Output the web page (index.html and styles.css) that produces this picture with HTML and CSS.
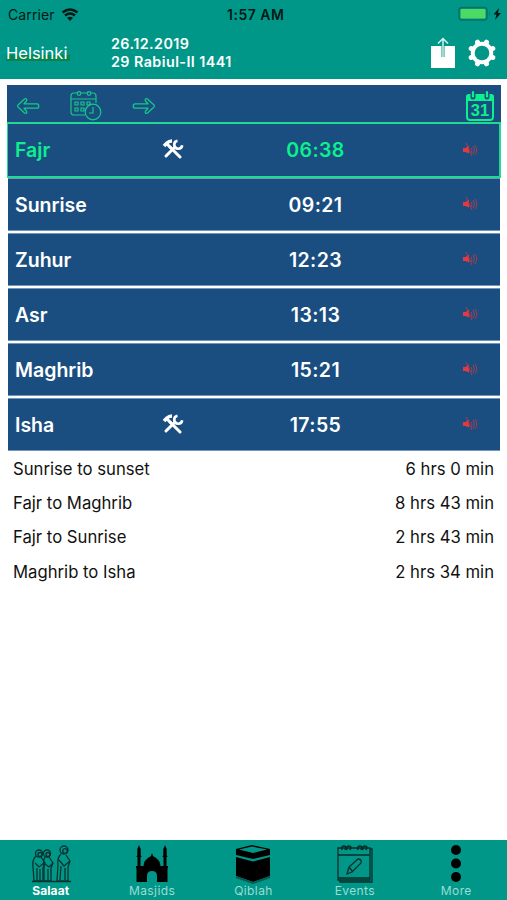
FILE: index.html
```html
<!DOCTYPE html>
<html lang="en">
<head>
<meta charset="utf-8">
<title>Salaat times</title>
<link rel="stylesheet" href="styles.css">
</head>
<body>
<svg class="defs" width="0" height="0" aria-hidden="true">
  <symbol id="arrow" viewBox="0 0 24 18"><path d="M8.500 2 2 8q-1 1 0 2l6.500 6c1.500 1 3-.5 2-2L8 11.200h13c2.300 0 2.300-4.400 0-4.400H8L10.500 4c1-1.500-.5-3-2-2Z" fill="none" stroke="#15c887" stroke-width="1.300" stroke-linejoin="round"/></symbol>
  <symbol id="tools" viewBox="0 0 22 20"><g fill="none" stroke="#fff"><path d="m8 8 10 10" stroke-width="3" stroke-linecap="round"/><path d="m4 17 9-9" stroke-width="3" stroke-linecap="round"/><path d="M15.500 1.800a4 4 0 1 0 4.700 4.500" stroke-width="2.600"/><path d="m2 7 3-3q2-2 5-2" stroke-width="3.600"/><path d="m4 4 5 5" stroke-width="3"/></g></symbol>
  <symbol id="mute" viewBox="0 0 16 16"><path d="M1 6h2.500L7 3.500v8L3.500 10H1Z" fill="#e5393f"/><path d="m4 1 6 13M9 6q2 2 0 5m2-7q3 4 0 8m2-9q3.500 5 0 10" fill="none" stroke="#a83c52" stroke-width="1"/></symbol>
</svg>
<div class="app">
  <header class="top">
    <div class="status">
      <span class="carrier">Carrier</span>
      <svg class="wifi" viewBox="0 0 18 13"><path d="M1.500 4.500q7.500-6 15 0M4 7.500q5-4 10 0" fill="none" stroke="#001814" stroke-width="2.300"/><path d="M6 9.800q3-2 6 0L9 13Z" fill="#001814"/></svg>
      <span class="clock">1:57 AM</span>
      <svg class="battery" viewBox="0 0 44 16"><rect x="1" y="1.500" width="28" height="12.500" rx="3" fill="none" stroke="#087064" stroke-width="1.500"/><rect x="2.500" y="3" width="25" height="9.500" rx="1" fill="#4cd964"/><path d="M31 5v5q2-2.500 0-5" fill="#087064"/><path d="M41 2 35.500 8.500h3L37 14l6-7h-3Z" fill="#001814"/></svg>
    </div>
    <div class="bar">
      <div class="city"><span>Helsinki</span></div>
      <div class="date">26.12.2019<br>29 Rabiul-II 1441</div>
      <svg class="share" viewBox="0 0 26 32"><path d="M1 9h24v22H1Z" fill="#fff"/><path d="M13 9v11" stroke="#009788" stroke-width="3"/><path d="M13 20V2M8 6.500 13 1.500l5 5" fill="none" stroke="#d5f1ed" stroke-width="1.500"/></svg>
      <svg class="gear" viewBox="0 0 30 30"><circle cx="15" cy="15" r="11.200" fill="#fff"/><g fill="none" stroke="#fff" stroke-width="5" stroke-linecap="round" transform="rotate(22.500 15 15)"><path d="M15 3.300v23.400M3.300 15h23.400"/><path d="M15 3.300v23.400M3.300 15h23.400" transform="rotate(45 15 15)"/></g><circle cx="15" cy="15" r="7.300" fill="#009788"/></svg>
    </div>
  </header>
  <main>
    <section class="times">
      <div class="tools">
        <svg class="prev"><use href="#arrow"/></svg>
        <svg class="schedule" viewBox="0 0 32 30"><g fill="none" stroke="#15c887" stroke-width="1.200"><path d="M15 24H4q-3 0-3-3V5q0-3 3-3h3m4 0h6m4 0h2q3 0 3 3v7M1 8h25"/><circle cx="9" cy="2.500" r="1.800"/><circle cx="19" cy="2.500" r="1.800"/><path d="M5 11h3v3H5Zm6 0h3v3h-3Zm6 0h3v3h-3ZM5 17h3v3H5Zm6 0h3v3h-3Z"/><circle cx="23" cy="21" r="7.800"/><path d="M23 16v6h-4"/></g></svg>
        <svg class="next"><use href="#arrow"/></svg>
        <svg class="month" viewBox="0 0 30 32"><rect x="2" y="5" width="26" height="25" rx="3" fill="none" stroke="#0cf08d" stroke-width="2"/><path d="M1 11V7q0-3 3-3h22q3 0 3 3v4Z" fill="#0cf08d"/><path d="M8 2v5m14-5v5" stroke="#1a4e80" stroke-width="5" stroke-linecap="round"/><path d="M8 2v4.500m14-4.500v4.500" stroke="#0cf08d" stroke-width="2.200" stroke-linecap="round"/><text x="15" y="26" text-anchor="middle">31</text></svg>
      </div>
      <div class="row current"><b>Fajr</b><svg class="tool"><use href="#tools"/></svg><time>06:38</time><svg class="mute"><use href="#mute"/></svg></div>
      <div class="row"><b>Sunrise</b><time>09:21</time><svg class="mute"><use href="#mute"/></svg></div>
      <div class="row"><b>Zuhur</b><time>12:23</time><svg class="mute"><use href="#mute"/></svg></div>
      <div class="row"><b>Asr</b><time>13:13</time><svg class="mute"><use href="#mute"/></svg></div>
      <div class="row"><b>Maghrib</b><time>15:21</time><svg class="mute"><use href="#mute"/></svg></div>
      <div class="row"><b>Isha</b><svg class="tool"><use href="#tools"/></svg><time>17:55</time><svg class="mute"><use href="#mute"/></svg></div>
    </section>
    <section class="spans">
      <div><span>Sunrise to sunset</span><span>6 hrs 0 min</span></div>
      <div><span>Fajr to Maghrib</span><span>8 hrs 43 min</span></div>
      <div><span>Fajr to Sunrise</span><span>2 hrs 43 min</span></div>
      <div><span>Maghrib to Isha</span><span>2 hrs 34 min</span></div>
    </section>
  </main>
  <nav>
    <div class="tab active"><svg viewBox="0 0 40 40"><g fill="none" stroke="#06342f" stroke-width="1.300"><circle cx="8" cy="9.500" r="3.500"/><circle cx="9" cy="10.500" r="2"/><path d="M5 12q-4 4-3 11l1 14h9V24l2-5-4-6M4 19l4 4 5-4M6 24v12m3-11v11"/><circle cx="16" cy="9.500" r="3.500"/><circle cx="17" cy="10.500" r="2"/><path d="M14 13q-2 3-1 9v15h7V24l2-5-4-6M14 20l4 3 4-4M17 25v11"/><circle cx="33" cy="6" r="4"/><circle cx="34" cy="7" r="2.300"/><path d="M30 10q-4 4-3 11l-1 16h11V23l2-6-4-6M28 16l5 6 6-5M30 22l-1 14m5-12v12M1 37.500h39"/></g></svg><span>Salaat</span></div>
    <div class="tab"><svg viewBox="0 0 40 40"><path d="M4.500 38V22h1V13h-1l.8-2V5L7 1l1.700 4v6l.8 2h-1v9h3q0-6 7.500-10l1-3 1 3q7.500 4 7.500 10h3v-9h-1l.8-2V5L33 1l1.700 4v6l.8 2h-1v9h1v16H25v-6q0-5-5-5t-5 5v6Z"/><path d="M4 23h32" stroke="#000" stroke-width="2"/></svg><span>Masjids</span></div>
    <div class="tab"><svg viewBox="0 0 40 40"><path d="m3 5 16-4 18 4v27l-17 6L3 32Z"/><path d="m6 5.500 13-3 15 3-14 3.500ZM3 11l17 4 17-4v2l-17 4.500L3 13Z" fill="#009788"/><path d="m3 33 17 6 17-6" stroke="#075d54" fill="none" stroke-width="2"/></svg><span>Qiblah</span></div>
    <div class="tab"><svg viewBox="0 0 40 40"><g fill="none" stroke="#062e2a" stroke-width="1.300"><path d="M3 4h32v32H3ZM3 11h32M35 5h2v33H5v-2M3 34h32"/><path d="m12 30 2-7 9-8q4 0 3 4l-9 9Zm2-7 4 5"/><path d="M7 6q-1-4 2-4t1 4m2 0q-1-4 2-4t1 4m8 0q-1-4 2-4t1 4m2 0q-1-4 2-4t1 4" stroke-width="1.600"/></g></svg><span>Events</span></div>
    <div class="tab"><svg viewBox="0 0 40 40"><circle cx="20" cy="6" r="5"/><circle cx="20" cy="19.500" r="5"/><circle cx="20" cy="33" r="5"/></svg><span>More</span></div>
  </nav>
</div>
</body>
</html>
```
FILE: styles.css
```css
* { box-sizing: border-box; }
body { margin: 0; font-family: Inter, "Liberation Sans", sans-serif; background: #fff; color: #111; }
svg { display: block; flex: none; }
.defs { position: absolute; }
.app { height: 900px; display: flex; flex-direction: column; }
.top { height: 79px; background: #009788; }
.status { height: 28px; display: grid; grid-template-columns: 61px 166px 1fr 49px; align-items: center; color: #001814; font-size: 14px; }
.carrier { padding-left: 8px; letter-spacing: .1px; }
.wifi { width: 18px; height: 13px; }
.clock { font-weight: 600; font-size: 14px; letter-spacing: .5px; }
.battery { width: 44px; height: 16px; }
.bar { height: 51px; display: flex; align-items: center; color: #fff; padding-bottom: 2px; }
.city { width: 111px; padding-left: 6px; font-size: 16.500px; }
.city span { background: linear-gradient(transparent 58%, #08854f 58%, #08854f 88%, transparent 88%); padding-right: 3px; }
.date { width: 319px; font-size: 14.300px; line-height: 18px; font-weight: 600; letter-spacing: .45px; }
.share { width: 26px; height: 32px; }
.gear { width: 30px; height: 30px; margin-left: 11px; }
main { flex: 1; padding: 6px 6px 0 7px; }
.tools { height: 37px; background: #1a4e80; display: flex; align-items: center; padding: 4px 6px 0 9px; }
.prev, .next { width: 24px; height: 18px; }
.next { transform: scaleX(-1); }
.schedule { width: 32px; height: 30px; margin: 0 30px; }
.month { width: 30px; height: 32px; margin-left: auto; }
.month text { font: 700 16.500px "Liberation Sans", sans-serif; fill: #0cf08d; }
.row { height: 53px; margin: 0 1px 2px; background: #1a4e80; display: grid; grid-template-columns: 146px 114px 80px 1fr; align-items: center; color: #fff; padding-left: 7px; font-size: 19.500px; border: solid #7196bb; border-width: 1px 0; }
.row b, .row time { font-weight: 600; }
.row time { grid-column: 3; text-align: center; letter-spacing: .4px; padding-left: 1px; }
.row .mute { grid-column: 4; width: 16px; height: 16px; margin: 0 0 1px 107px; }
.row .tool { width: 22px; height: 20px; margin: 0 0 2px 1px; }
.current { height: 56px; margin: 0; padding-left: 6px; border: 2px solid #20d992; border-width: 2px 2px 2px 1px; padding-left: 7px; color: #0cf08d; }
.spans { padding: 1px 7px 0 6px; font-size: 16.700px; }
.spans div { height: 34.200px; display: flex; justify-content: space-between; align-items: center; }
.times .row:last-child { margin-bottom: 0; }
nav { height: 60px; background: #009788; display: grid; grid-template-columns: repeat(5, 1fr); }
.tab { display: flex; flex-direction: column; align-items: center; padding-top: 4px; font-size: 12px; line-height: 14px; letter-spacing: .4px; color: #9bdcd4; }
.tab svg { width: 40px; height: 40px; }
.active { color: #fff; font-weight: 700; letter-spacing: .1px; }
```
